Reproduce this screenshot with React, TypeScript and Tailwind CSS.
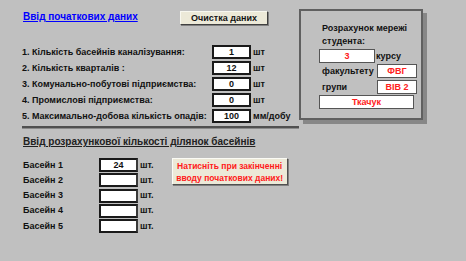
import React from "react";

const rows = [
  { label: "1. Кількість басейнів каналізування:", value: "1", unit: "шт" },
  { label: "2. Кількість кварталів :", value: "12", unit: "шт" },
  { label: "3. Комунально-побутові підприємства:", value: "0", unit: "шт" },
  { label: "4. Промислові підприємства:", value: "0", unit: "шт" },
  { label: "5. Максимально-добова кількість опадів:", value: "100", unit: "мм/добу" },
];

const basins = [
  { label: "Басейн 1", value: "24" },
  { label: "Басейн 2", value: "" },
  { label: "Басейн 3", value: "" },
  { label: "Басейн 4", value: "" },
  { label: "Басейн 5", value: "" },
];

export default function App() {
  return (
    <div className="w-[466px] h-[261px] bg-[#c0c0c0] overflow-hidden flex font-['Liberation_Sans',Arial,sans-serif] text-[#111]">
      {/* left column */}
      <div className="w-[277px] ml-[22px] flex flex-col">
        <div className="flex items-start mt-[11px] h-[14px]">
          <span className="w-[158px] pl-[1px] text-[10px] leading-[11px] font-bold text-[#0000ff] underline underline-offset-[1px] whitespace-nowrap">
            Ввід початкових даних
          </span>
          <button className="w-[88px] h-[14px] bg-[#ece9d8] border border-[#f8f8f0] border-r-[#404040] border-b-[#404040] shadow-[1px_1px_0_#808080] text-[9px] leading-[12px] font-bold text-[#111]">
            Очистка даних
          </button>
        </div>

        <div className="mt-[20px] flex flex-col gap-[2px]">
          {rows.map((r) => (
            <div key={r.label} className="flex items-center h-[14px]">
              <span className="w-[190px] text-[9px] font-bold leading-[14px] whitespace-nowrap">{r.label}</span>
              <div className="w-[39px] h-[14px] bg-white border-2 border-[#1a1a1a] flex items-center justify-center text-[9px] font-bold leading-none">
                {r.value}
              </div>
              <span className="ml-[2px] text-[9px] font-bold leading-none">{r.unit}</span>
            </div>
          ))}
        </div>

        <div className="mt-[3px] h-[2px] bg-[#505050] border-b border-[#8a8a8a] box-content" />

        <div className="mt-[7px] ml-[1px] text-[10px] leading-[12px] font-bold text-[#222] underline underline-offset-[1px] whitespace-nowrap">
          Ввід розрахункової кількості ділянок басейнів
        </div>

        <div className="flex mt-[10px]">
          <div className="flex flex-col gap-[1.3px]">
            {basins.map((b) => (
              <div key={b.label} className="flex items-center h-[14px]">
                <span className="w-[76px] ml-[1px] text-[9px] font-bold leading-none">{b.label}</span>
                <div className="w-[39px] h-[14px] bg-white border-2 border-[#1a1a1a] border-r-[#3a3a3a] flex items-center justify-center text-[9px] font-bold leading-none">
                  {b.value}
                </div>
                <span className="ml-[2px] text-[9px] font-bold leading-none">шт.</span>
              </div>
            ))}
          </div>
          <button className="ml-[18px] w-[116px] h-[27px] bg-[#ece9d8] border border-[#fbfbf5] border-r-[#505050] border-b-[#505050] shadow-[1px_1px_0_#808080] flex flex-col items-center justify-center text-[8.5px] leading-[12px] font-bold text-[#ff1a1a]">
            <span>Натисніть при закінченні</span>
            <span>вводу початкових даних!</span>
          </button>
        </div>
      </div>

      {/* right panel */}
      <div className="mt-[9px] w-[124px] h-[111px] border-2 border-[#606060] shadow-[4px_4px_0_#878787] bg-[#c0c0c0] flex flex-col pl-[18px] pt-[10px] text-[9px] font-bold">
        <div className="ml-[3px] leading-[14px]">Розрахунок мережі</div>
        <div className="ml-[3px] leading-[13px]">студента:</div>
        <div className="flex items-center mt-[1px]">
          <div className="w-[56px] h-[14px] bg-white border border-[#555] flex items-center justify-center text-[#ff2020] leading-none">3</div>
          <span className="ml-[1px] leading-none">курсу</span>
        </div>
        <div className="flex items-center mt-[1px]">
          <span className="w-[55px] ml-[3px] leading-none">факультету</span>
          <div className="w-[40px] h-[14px] bg-white border border-[#555] flex items-center justify-center text-[#ff2020] leading-none">ФВГ</div>
        </div>
        <div className="flex items-center mt-[2px]">
          <span className="w-[55px] ml-[3px] leading-none">групи</span>
          <div className="w-[40px] h-[14px] bg-white border border-[#555] flex items-center justify-center text-[#ff2020] leading-none">ВІВ 2</div>
        </div>
        <div className="mt-[1px] w-[95px] h-[14px] bg-white border border-[#555] flex items-center justify-center text-[#ff2020] leading-none">Ткачук</div>
      </div>
    </div>
  );
}
